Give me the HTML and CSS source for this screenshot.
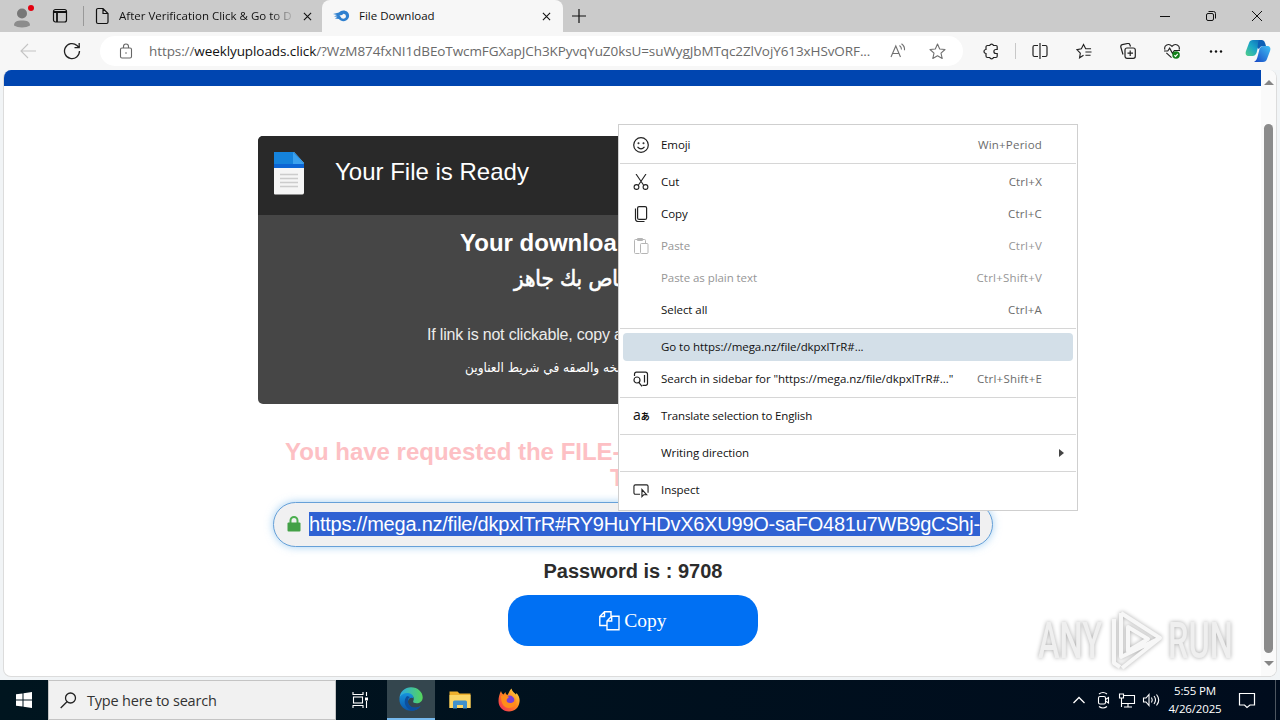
FILE: index.html
```html
<!DOCTYPE html>
<html lang="en">
<head>
    <meta charset="UTF-8">
    <meta name="viewport" content="width=device-width, initial-scale=1.0">
    <title>File Download</title>
    <link rel="stylesheet" href="styles.css">
</head>
<body>

    <div class="tabBar">
        <div class="profile">
            <svg width="24" height="28" viewBox="0 0 24 28"><circle cx="12" cy="11.500" r="5" fill="#777"/><path d="M4 23.500c0-4 3-5 8-5s8 1 8 5c-4 2.500-12 2.500-16 0z" fill="#8c8c8c"/><circle cx="21" cy="6" r="3" fill="#e3000f"/></svg>
        </div>
        <div class="tabActions">
            <svg width="16" height="16" viewBox="0 0 16 16" fill="none" stroke="#111" stroke-width="1.200"><rect x="1.500" y="1.500" width="13" height="12.500" rx="2"/><path d="M1.500 4h13M5 4v10" stroke-width="1.800"/></svg>
        </div>
        <div class="tab">
            <svg width="14" height="18" viewBox="0 0 14 18" fill="none" stroke="#111" stroke-width="1.200"><path d="M3 1.500h5L13 6.500V15a1.500 1.500 0 0 1-1.500 1.500h-8.500A1.500 1.500 0 0 1 1.500 15V3A1.500 1.500 0 0 1 3 1.500zM8 1.500v5h5"/></svg>
            <span class="tabTitle first">After Verification Click &amp; Go to D</span>
            <svg class="close" width="9" height="9" viewBox="0 0 10 10" stroke="#111" stroke-width="1.200"><path d="M1 1l8 8M9 1l-8 8"/></svg>
        </div>
        <div class="tab active">
            <svg width="17" height="14" viewBox="0 0 17 14"><path d="M0 5L6 3.500C8 1 12 .8 14.500 3c2.500 2.500 2 6.500-1 8.300-3 1.700-6 .7-7.500-1.300L2 9.500l2.500-1.800L1 7.500l3-1.500z" fill="#2f80cf"/><path d="M6.500 6.500q3-.3 4-1.700 2.500.2 2.500 2.400t-2.500 2.600Q8 9.800 7.800 8z" fill="#f7f7f7"/></svg>
            <span class="tabTitle second">File Download</span>
            <svg class="close" width="9" height="9" viewBox="0 0 10 10" stroke="#111" stroke-width="1.200"><path d="M1 1l8 8M9 1l-8 8"/></svg>
        </div>
        <div class="newTab">
            <svg width="14" height="14" viewBox="0 0 14 14" stroke="#111" stroke-width="1.200"><path d="M7 0v14M0 7h14"/></svg>
        </div>
        <div class="windowButtons">
            <svg width="10" height="10" viewBox="0 0 10 10" stroke="#111"><path d="M0 5.500h10"/></svg>
            <svg width="10" height="10" viewBox="0 0 10 10" fill="none" stroke="#111"><rect x=".5" y="2.500" width="7" height="7" rx="1.500"/><path d="M2.500.5H7.500a2 2 0 0 1 2 2v5"/></svg>
            <svg width="10" height="10" viewBox="0 0 10 10" stroke="#111"><path d="M0 0l10 10M10 0L0 10"/></svg>
        </div>
    </div>

    <div class="toolbar">
        <div class="navButtons">
            <svg width="16" height="16" viewBox="0 0 16 16" fill="none" stroke="#c4c4c4" stroke-width="1.100"><path d="M16 8H1M8 1L1 8l7 7"/></svg>
            <svg width="18" height="18" viewBox="0 0 18 18" fill="none" stroke="#222" stroke-width="1.300"><path d="M16.500 9A7.500 7.500 0 1 1 14 3.500L16 5.500M16.200 1v4.700h-4.700"/></svg>
        </div>
        <div class="address">
            <svg width="14" height="16" viewBox="0 0 14 16" fill="none" stroke="#666" stroke-width="1.100"><rect x="1.500" y="5" width="11" height="10" rx="1.500"/><path d="M4.500 5V3.500a2.500 2.500 0 0 1 5 0V5"/><circle cx="7" cy="10" r=".8" fill="#666" stroke="none"/></svg>
            <span class="url">https://<b>weeklyuploads.click</b>/?WzM874fxNI1dBEoTwcmFGXapJCh3KPyvqYuZ0ksU=suWygJbMTqc2ZlVojY613xHSvORF...</span>
            <svg class="readAloud" width="16" height="16" viewBox="0 0 16 16" fill="none" stroke="#707070" stroke-width="1.100"><path d="M1 14L5.800 3l4.700 11M2.500 10.500H9M9.500 2.500q2 1.500 2 4M11.500.7q3.500 2.500 3 6.500"/></svg>
            <svg width="17" height="17" viewBox="0 0 17 17" fill="none" stroke="#707070" stroke-width="1.100"><path d="M8.500 1l2.200 5 5.300.5-4 3.600 1.200 5.400-4.700-2.800-4.700 2.800L5 10.100 1 6.500l5.300-.5z" stroke-linejoin="round"/></svg>
        </div>
        <svg class="puzzle" width="17" height="17" viewBox="0 0 17 17" fill="none" stroke="#222" stroke-width="1.200"><path d="M4.500 2.500h2.200a2 2 0 0 1 3.800 0h2.500a1.200 1.200 0 0 1 1.200 1.200v2.800h-1.300a2 2 0 1 0 0 4h1.300v2.800a1.200 1.200 0 0 1-1.200 1.200h-2.500a2 2 0 0 1-3.800 0H4.500A1.500 1.500 0 0 1 3 13v-2.500a2 2 0 0 1 0-4V4a1.500 1.500 0 0 1 1.500-1.500z"/></svg>
        <div class="divider"></div>
        <div class="tools">
            <svg width="16" height="16" viewBox="0 0 16 16" fill="none" stroke="#222" stroke-width="1.200"><path d="M6 2.500H2.500A1.500 1.500 0 0 0 1 4v8a1.500 1.500 0 0 0 1.500 1.500H6M10 2.500h3.500A1.500 1.500 0 0 1 15 4v8a1.500 1.500 0 0 1-1.500 1.500H10M8 0v16"/></svg>
            <svg width="16" height="16" viewBox="0 0 17 16" fill="none" stroke="#222" stroke-width="1.200"><path d="M8 12.500L3.800 15.200l.8-5L1 6.500l4.700-.9L8 1l2.300 4.600H16M10 9h6.500M10 12.500h5.500"/></svg>
            <svg width="16" height="16" viewBox="0 0 16 16" fill="none" stroke="#222" stroke-width="1.200"><rect x="5" y="5" width="10.300" height="10.300" rx="2"/><path d="M10.200 7.500v5.500M7.500 10.200h5.500M3 11.500L.8 4a2 2 0 0 1 1.400-2.300l5.500-1.200A2 2 0 0 1 10 2l.5 1.500"/></svg>
            <svg width="16" height="16" viewBox="0 0 17 17" fill="none" stroke="#222" stroke-width="1.200"><path d="M1 7C-.5 2.500 5-.5 8.500 3.500 12-.5 17.500 2.500 16 7M2.500 10.500L8 15.500M0 8.500h4l2-3 3 5.500 2-3h6"/><circle cx="12.800" cy="12.800" r="4" fill="#12801a" stroke="none"/><path d="M11 13l1.300 1.200L14.600 11.500" stroke="#fff"/></svg>
            <svg width="16" height="16" viewBox="0 0 16 16" fill="#111"><circle cx="3" cy="8.500" r="1.200"/><circle cx="8" cy="8.500" r="1.200"/><circle cx="13" cy="8.500" r="1.200"/></svg>
        </div>
        <svg class="copilot" width="26" height="24" viewBox="0 0 26 24">
            <defs>
                <linearGradient id="copA" x1="0" y1="1" x2="1" y2="0"><stop offset="0" stop-color="#52cf86"/><stop offset=".5" stop-color="#1aa6c8"/><stop offset="1" stop-color="#0d62b8"/></linearGradient>
                <linearGradient id="copB" x1="0" y1="1" x2="1" y2="0"><stop offset="0" stop-color="#1746c4"/><stop offset="1" stop-color="#3fc0f5"/></linearGradient>
            </defs>
            <path d="M8 1h9c-2 1-3 3-4 7l-1.500 6c-1 2-2 3-4 3H4c-3 0-4-2-3-5l3-8c.5-2 2-3 4-3z" fill="url(#copA)"/>
            <path d="M18 23H9c2-1 3-3 4-7l1.500-6c1-2 2-3 4-3H22c3 0 4 2 3 5l-3 8c-.5 2-2 3-4 3z" fill="url(#copB)"/>
            <path d="M14 1h3c2 0 3 2 4 6h-3c-2 0-3 1-4 3l-1.500-1c.5-4 .5-6 1.500-8z" fill="#0d5fb5"/>
        </svg>
    </div>

    <div class="viewport">
        <div class="page">
            <div class="blueBar"></div>
            <div class="content">
                <div class="card">
                    <div class="cardHeader">
                        <svg width="32" height="44" viewBox="0 0 32 44"><path d="M1 0h20l10 11v30a2 2 0 0 1-2 1.500H2a1 1 0 0 1-1-1z" fill="#f5f5f5"/><path d="M1 0h20l10 11v5H1z" fill="#1583dc"/><path d="M1 12h30v4H1z" fill="#0c65d4"/><path d="M20 0l11 12H20z" fill="#3ba1ee"/><path d="M7 22.500h18M7 26.500h18M7 30.500h18M7 34.500h18" stroke="#ccc" stroke-width="1.500"/></svg>
                        <span>Your File is Ready</span>
                    </div>
                    <div class="cardBody">
                        <div class="ready">Your downloa</div>
                        <div class="readyAr" dir="rtl">خاص بك جاهز</div>
                        <div class="hint">If link is not clickable, copy a</div>
                        <div class="hintAr" dir="rtl">نسخه والصقه في شريط العناوين</div>
                    </div>
                </div>
                <div class="requested">You have requested the FILE-</div>
                <div class="requested secondLine">T</div>
                <div class="linkBox">
                    <svg width="14" height="16" viewBox="0 0 14 16"><path d="M3.500 8V4.500a3.500 3.500 0 0 1 7 0V8" fill="none" stroke="#4caf50" stroke-width="2"/><rect x=".5" y="6.500" width="13" height="9" rx="1" fill="#43a047"/></svg>
                    <span>https://mega.nz/file/dkpxlTrR#RY9HuYHDvX6XU99O-saFO481u7WB9gCShj-</span>
                </div>
                <div class="password">Password is : 9708</div>
                <div class="copyButton">
                    <svg width="21" height="20" viewBox="0 0 21 20" fill="none" stroke="#fff" stroke-width="1.400"><path d="M8 14.500H.8V5.500L5.500.8H12v4.500M5.500.8v4.700H.8M8 10l4.700-4.700H20v13.500H8zM12.700 5.300V10H8"/></svg>
                    <span>Copy</span>
                </div>
            </div>
        </div>
        <div class="scrollbar">
            <div class="arrow up"></div>
            <div class="thumb"></div>
            <div class="arrow down"></div>
        </div>
    </div>

    <div class="contextMenu">
        <div class="menuItem">
            <svg width="16" height="16" viewBox="0 0 16 16" fill="none" stroke="#222" stroke-width="1.200"><circle cx="8" cy="8" r="7.300"/><path d="M4.500 9.800q3.500 4 7 0"/><circle cx="5.500" cy="6.200" r=".4" fill="#222"/><circle cx="10.500" cy="6.200" r=".4" fill="#222"/></svg>
            <span>Emoji</span><kbd>Win+Period</kbd>
        </div>
        <div class="line"></div>
        <div class="menuItem">
            <svg width="16" height="16" viewBox="0 0 16 16" fill="none" stroke="#222" stroke-width="1.100"><path d="M3 0l7.500 11M13 0L5.500 11"/><circle cx="3.500" cy="13" r="2.400"/><circle cx="12.500" cy="13" r="2.400"/></svg>
            <span>Cut</span><kbd>Ctrl+X</kbd>
        </div>
        <div class="menuItem">
            <svg width="16" height="16" viewBox="0 0 16 16" fill="none" stroke="#222" stroke-width="1.200"><rect x="4.600" y=".6" width="9" height="12.800" rx="1.500"/><path d="M2.500 2.500v10.500a2.500 2.500 0 0 0 2.500 2.500h6.500"/></svg>
            <span>Copy</span><kbd>Ctrl+C</kbd>
        </div>
        <div class="menuItem disabled">
            <svg width="16" height="16" viewBox="0 0 16 16" fill="none" stroke="#b5b5b5" stroke-width="1"><path d="M6.500 15.500h-4a1 1 0 0 1-1-1v-12a1 1 0 0 1 1-1h9a1 1 0 0 1 1 1V5M4.500 2.500v-2h5v2z"/><rect x="7.500" y="5.500" width="7.500" height="10" rx="1"/></svg>
            <span>Paste</span><kbd>Ctrl+V</kbd>
        </div>
        <div class="menuItem disabled">
            <i></i><span>Paste as plain text</span><kbd>Ctrl+Shift+V</kbd>
        </div>
        <div class="menuItem">
            <i></i><span>Select all</span><kbd>Ctrl+A</kbd>
        </div>
        <div class="line"></div>
        <div class="menuItem selected">
            <i></i><span>Go to https://mega.nz/file/dkpxlTrR#...</span>
        </div>
        <div class="menuItem">
            <svg width="16" height="16" viewBox="0 0 16 16" fill="none" stroke="#222" stroke-width="1.200"><path d="M1.500 5V3A1.800 1.800 0 0 1 3.300 1.200h9.400A1.800 1.800 0 0 1 14.500 3v9.500a1.800 1.800 0 0 1-1.800 1.800H9.500M11.500 4v7.500M5.800 11.300l3.200 4"/><circle cx="4" cy="9" r="3"/></svg>
            <span>Search in sidebar for "https://mega.nz/file/dkpxlTrR#..."</span><kbd>Ctrl+Shift+E</kbd>
        </div>
        <div class="line"></div>
        <div class="menuItem">
            <b class="translateIcon">a<small>あ</small></b>
            <span class="translate">Translate selection to English</span>
        </div>
        <div class="line"></div>
        <div class="menuItem">
            <i></i><span>Writing direction</span><div class="submenuArrow"></div>
        </div>
        <div class="line"></div>
        <div class="menuItem">
            <svg width="16" height="16" viewBox="0 0 17 16" fill="none" stroke="#222" stroke-width="1.200"><path d="M7.500 12.500H2.500A1.500 1.500 0 0 1 1 11V4a1.500 1.500 0 0 1 1.500-1.500h12A1.500 1.500 0 0 1 16 4v7M9.500 7.500v7.500l2-2h3z"/></svg>
            <span>Inspect</span>
        </div>
    </div>

    <div class="watermark">
        <span>ANY</span>
        <svg width="60" height="64" viewBox="0 0 60 64" fill="none" stroke="#f7f7f7" stroke-width="4" stroke-linejoin="round"><path d="M16 4L55 29 17 59M16 4v44L55 29M23 18l20 12-20 12zM9 10v44l6 4"/></svg>
        <span>RUN</span>
    </div>

    <div class="taskbar">
        <div class="start">
            <svg width="16" height="16" viewBox="0 0 16 16" fill="#fff"><path d="M0 2.300L6.500 1.400V7.500H0zM7.500 1.200L16 0v7.500H7.500zM0 8.500h6.500v6.100L0 13.700zM7.500 8.500H16V16l-8.500-1.200z"/></svg>
        </div>
        <div class="search">
            <svg width="17" height="17" viewBox="0 0 17 17" fill="none" stroke="#222" stroke-width="1.300"><circle cx="10.500" cy="6" r="5"/><path d="M7 9.700L.7 16"/></svg>
            <span>Type here to search</span>
        </div>
        <div class="app taskView">
            <svg width="17" height="16" viewBox="0 0 17 16" fill="none" stroke="#fff" stroke-width="1.100"><path d="M1 0v2.500h10V0M1 16v-2.500h10V16M14.500 0v4M14.500 9v7"/><rect x="1.500" y="5" width="9" height="6"/><path d="M13 5.500h3v3h-3z" fill="#fff" stroke="none"/></svg>
        </div>
        <div class="app edge">
            <svg width="24" height="24" viewBox="0 0 24 24">
                <defs>
                    <linearGradient id="edgeA" x1="0" y1="0" x2="1" y2="0"><stop offset="0" stop-color="#2aa8e8"/><stop offset="1" stop-color="#55d65a"/></linearGradient>
                    <linearGradient id="edgeB" x1="0" y1="0" x2="0" y2="1"><stop offset="0" stop-color="#1593dd"/><stop offset="1" stop-color="#0b56aa"/></linearGradient>
                </defs>
                <path d="M.5 11C1 4.500 6 .3 12 .3c7 0 11.700 5 11.700 10 0 4-3 6-6 6-2.500 0-4-1-3.500-2 2-4-1-7-5-7-4 0-7.500 1.500-8.700 3.700z" fill="url(#edgeA)"/>
                <path d="M.5 11C2 7 6 5.500 9.500 6c3 .5 5 2.500 5 5.500-2-2-6 0-5.500 4 .5 5 7 7 12.500 3.500C19 22.500 15.500 24 12 23.800 5 23.500-.3 18 .5 11z" fill="url(#edgeB)"/>
                <path d="M8 9c-4 4-3 12 5 14.700 4 0 7-2 8.700-4.700-5 3-12 1.500-12.700-4C8.800 13 9 11 11 10z" fill="#0c4f9e"/>
            </svg>
        </div>
        <div class="app">
            <svg width="22" height="20" viewBox="0 0 22 20"><path d="M.5 1.500h8l2 2h11V18H.5z" fill="#eeb02d"/><path d="M.5 5h21v13H.5z" fill="#fbd667"/><path d="M4 18.500V12a1.500 1.500 0 0 1 1.500-1.500h11A1.500 1.500 0 0 1 18 12v6.500h-4V15H8v3.500z" fill="#3f91cd"/></svg>
        </div>
        <div class="app">
            <svg width="24" height="24" viewBox="0 0 24 24">
                <defs><linearGradient id="fox" x1="1" y1="0" x2="0" y2="1"><stop offset="0" stop-color="#ffe54a"/><stop offset=".45" stop-color="#ff8a1e"/><stop offset="1" stop-color="#f0205e"/></linearGradient></defs>
                <path d="M4 3c.5 2 1.500 3 2.500 3.500L8.500 4c0 1.500.5 2.500 2 3C12 5 12 3 14.500.5c.5 3 3 4 4.500 6l.5-1.500c2.500 3 3.500 5.500 3 9-.8 6-5 9.500-10.500 9.500C6 23.500 1.500 19 1.500 13 1.500 9 2.500 6 4 3z" fill="url(#fox)"/>
                <circle cx="12.500" cy="12.500" r="5" fill="#7a3fd4"/>
                <path d="M4 8c3-1.500 6 0 8 1l-2 2c-1 2 0 4 3 4s5-2 5-5c2 6-1 10-6 10S4 16 4 8z" fill="#ff8c1a"/>
            </svg>
        </div>
        <div class="tray">
            <svg width="24" height="18" viewBox="0 0 24 18" fill="none" stroke="#fff" stroke-width="1.300"><path d="M6.500 12L12 6.500l5.500 5.500"/></svg>
            <svg width="24" height="18" viewBox="0 0 24 18" fill="none" stroke="#fff" stroke-width="1.100"><rect x="7.500" y="5.500" width="7" height="7.500" rx="1.500"/><path d="M14.500 8.500l3-2v5.500l-3-2M8 3q4-3 8 0M8 15.500q4 3 8 0"/></svg>
            <svg width="24" height="18" viewBox="0 0 24 18" fill="none" stroke="#fff" stroke-width="1.100"><path d="M8.500 4.500H19.500v8H6.500V8M13 12.500v3.500M9 16h8M4.500 3h4v4h-4zM6.500 7v9"/></svg>
            <svg width="24" height="18" viewBox="0 0 24 18" fill="none" stroke="#fff" stroke-width="1.100"><path d="M4.500 7h2.500l3-3.500v11L7 11H4.500zM12.500 6.500q1.500 2.500 0 5M15 5q3 4 0 8M17.500 3.500q4.500 5.500 0 11"/></svg>
            <div class="clock"><span>5:55 PM</span><span>4/26/2025</span></div>
            <svg class="notify" width="18" height="18" viewBox="0 0 18 18" fill="none" stroke="#fff" stroke-width="1.200"><path d="M1.500 2.500h15v11.500H12L9 16.500 6.500 14h-5z"/></svg>
            <div class="showDesktop"></div>
        </div>
    </div>

</body>
</html>
```
FILE: styles.css
```css
body {
    margin: 0;
    width: 1280px;
    height: 720px;
    overflow: hidden;
    display: flex;
    flex-direction: column;
    font-family: "Open Sans", "Noto Sans", sans-serif;
    font-size: 11.5px;
    color: #111;
    background-color: #f1f4f6;
}

svg {
    display: block;
    flex-shrink: 0;
}

/* Tabs */
.tabBar {
    height: 32px;
    background-color: #cbcbcb;
    display: flex;
    align-items: center;
}

.profile {
    width: 24px;
    padding-left: 10px;
}

.tabActions {
    padding: 0 15px 0 18px;
    border-right: 1px solid #999;
    height: 20px;
    display: flex;
    align-items: center;
}

.tab {
    box-sizing: border-box;
    width: 237px;
    height: 32px;
    padding: 0 9px 0 11px;
    display: flex;
    align-items: center;
    border-radius: 8px 8px 0 0;
}

.tab.active {
    width: 241px;
    margin-left: 1px;
    padding-right: 12px;
    background-color: #f7f7f7;
}

.tabTitle {
    flex-grow: 1;
    white-space: nowrap;
    padding: 0 0 2px 9px;
}

.tabTitle.first {
    flex-grow: 0;
    width: 174px;
    padding-left: 10px;
    margin-right: auto;
    background: linear-gradient(to right, #111 88%, #bbb 100%);
    background-clip: text;
    -webkit-background-clip: text;
    color: transparent;
}

.newTab {
    padding-left: 9px;
}

.windowButtons {
    margin-left: auto;
    padding: 0 18px;
    display: flex;
    gap: 36px;
}

/* Toolbar */
.toolbar {
    height: 38px;
    background-color: #f7f7f7;
    display: flex;
    align-items: center;
}

.navButtons {
    width: 80px;
    padding-left: 20px;
    display: flex;
    align-items: center;
    gap: 27px;
}

.address {
    box-sizing: border-box;
    width: 863px;
    height: 30px;
    padding: 0 17px 0 19px;
    border-radius: 15px;
    background-color: #fff;
    display: flex;
    align-items: center;
}

.url {
    width: 725px;
    padding-left: 16px;
    font-size: 13.5px;
    letter-spacing: -0.09px;
    white-space: nowrap;
    color: #6a6a6a;
}

.url b {
    font-weight: normal;
    color: #111;
}

.readAloud {
    margin: 0 23px 0 17px;
}

.puzzle {
    margin-left: 20px;
}

.divider {
    width: 1px;
    height: 16px;
    margin: 0 16px 0 15px;
    background-color: #c8c8c8;
}

.tools {
    display: flex;
    gap: 28px;
}

.copilot {
    margin-left: 21px;
}

/* Page area */
.viewport {
    flex-shrink: 0;
    height: 606px;
    margin: 0 3px 3px;
    border: 1px solid #dcdcdc;
    border-top: 0;
    border-radius: 8px;
    overflow: hidden;
    display: flex;
    background-color: #fff;
}

.page {
    width: 1257px;
    font-family: "Liberation Sans", Arial, sans-serif;
}

.blueBar {
    height: 16px;
    background-color: #0045b0;
}

.content {
    width: 750px;
    margin: 50px auto 0 254px;
}

.card {
    height: 268px;
    border-radius: 5px;
    overflow: hidden;
    background-color: #464646;
    color: #fff;
}

.cardHeader {
    height: 79px;
    background-color: #292929;
    display: flex;
    font-size: 24px;
}

.cardHeader svg {
    margin: 16px 0 0 15px;
}

.cardHeader span {
    padding: 22px 0 0 30px;
}

.cardBody {
    white-space: nowrap;
}

.cardBody div {
    text-align: left;
}

.ready {
    font-size: 24px;
    font-weight: bold;
    line-height: 28px;
    padding: 14px 0 0 202px;
}

.readyAr {
    font-family: "DejaVu Sans Condensed", "DejaVu Sans", sans-serif;
    font-size: 22px;
    font-weight: normal;
    -webkit-text-stroke: 0.6px #fff;
    line-height: 32px;
    padding: 6px 0 0 256px;
}

.hint {
    font-size: 16px;
    letter-spacing: -0.19px;
    line-height: 20px;
    padding: 30px 0 0 169px;
    color: #ececec;
}

.hintAr {
    font-family: "DejaVu Sans Condensed", "DejaVu Sans", sans-serif;
    font-size: 13.5px;
    line-height: 20px;
    padding: 12px 0 0 207px;
}

.requested {
    padding-left: 27px;
    margin-top: 35px;
    font-size: 24px;
    font-weight: bold;
    line-height: 26px;
    color: #fdc0c4;
}

.requested.secondLine {
    padding-left: 352px;
    margin-top: 0;
}

.linkBox {
    box-sizing: border-box;
    width: 720px;
    height: 45px;
    margin: 11px 0 0 15px;
    padding: 0 0 1px 13px;
    border: 1px solid #66a0d8;
    border-radius: 23px;
    background-color: #f0f0f1;
    box-shadow: 0 0 8px rgba(102, 175, 233, 0.6);
    display: flex;
    align-items: center;
    gap: 8px;
}

.linkBox span {
    height: 24px;
    line-height: 24px;
    font-size: 20px;
    letter-spacing: -0.23px;
    color: #fff;
    background-color: #3062d3;
    white-space: nowrap;
}

.password {
    margin-top: 12px;
    text-align: center;
    font-size: 20px;
    font-weight: bold;
    line-height: 24px;
    color: #2c2c2c;
}

.copyButton {
    width: 250px;
    height: 51px;
    margin: 12px auto 0;
    border-radius: 20px;
    background-color: #0070f3;
    color: #fff;
    font-family: "Liberation Serif", "Times New Roman", serif;
    font-size: 19.5px;
    display: flex;
    align-items: center;
    justify-content: center;
    gap: 4px;
}

.scrollbar {
    width: 15px;
    background-color: #fafafa;
    display: flex;
    flex-direction: column;
    align-items: center;
}

.arrow {
    border: 5px solid transparent;
}

.arrow.up {
    border-bottom-color: #858585;
    border-top-width: 0;
    margin-top: 10px;
}

.arrow.down {
    border-top-color: #858585;
    border-bottom-width: 0;
    margin-top: 8px;
}

.thumb {
    width: 9px;
    height: 529px;
    margin-top: 39px;
    border-radius: 5px;
    background-color: #8b8b8b;
}

/* Context menu */
.contextMenu {
    position: absolute;
    box-sizing: border-box;
    left: 618px;
    top: 124px;
    width: 460px;
    height: 387px;
    padding: 4px 0;
    border: 1px solid #cfcfcf;
    background-color: #fff;
    display: flex;
    flex-direction: column;
}

.menuItem {
    box-sizing: border-box;
    height: 32px;
    flex-shrink: 0;
    padding: 0 35px 0 14px;
    display: flex;
    align-items: center;
    white-space: nowrap;
    letter-spacing: -0.06px;
}

.menuItem svg,
.menuItem i,
.translateIcon {
    width: 16px;
    margin-right: 12px;
}

.menuItem span,
.menuItem kbd {
    padding-bottom: 2px;
}

.menuItem .translate {
    letter-spacing: -0.15px;
}

.menuItem kbd {
    margin-left: auto;
    font-family: inherit;
    font-size: 11.5px;
    letter-spacing: 0.2px;
    color: #6c6c6c;
}

.menuItem.disabled,
.menuItem.disabled kbd {
    color: #969696;
}

.menuItem.selected {
    height: 28px;
    margin: 2px 4px;
    padding-left: 10px;
    border-radius: 4px;
    background-color: #d3dfe8;
}

.line {
    height: 1px;
    flex-shrink: 0;
    margin: 2px 1px;
    background-color: #d6d6d6;
}

.translateIcon {
    font-size: 14px;
    font-weight: normal;
    line-height: 16px;
}

.translateIcon small {
    font-family: "Noto Sans CJK JP", sans-serif;
    font-size: 9px;
    font-weight: bold;
}

.submenuArrow {
    margin-left: auto;
    margin-right: -22px;
    border: 4px solid transparent;
    border-left: 5px solid #444;
    border-right: 0;
}

/* Watermark over the page */
.watermark {
    position: absolute;
    left: 1038px;
    top: 608px;
    width: 193px;
    height: 66px;
    display: flex;
    align-items: center;
    justify-content: space-between;
    filter: drop-shadow(0 0 2px #aaa);
}

.watermark span {
    width: 63px;
    font-family: Roboto, sans-serif;
    font-size: 50px;
    font-weight: 500;
    line-height: 60px;
    color: #efefef;
    transform: scaleX(0.65);
    transform-origin: left;
}

/* Taskbar */
.taskbar {
    height: 40px;
    display: flex;
    background: linear-gradient(to right, #00151f, #000c1d);
}

.start {
    width: 48px;
    display: flex;
    align-items: center;
    justify-content: center;
}

.search {
    box-sizing: border-box;
    width: 288px;
    padding-left: 11px;
    border: 1px solid #c4c4c4;
    background-color: #f1f1f1;
    display: flex;
    align-items: center;
    gap: 10px;
    font-size: 14.5px;
    letter-spacing: -0.2px;
    color: #333;
}

.app {
    width: 49px;
    display: flex;
    align-items: center;
    justify-content: center;
}

.app.taskView {
    box-sizing: border-box;
    width: 51px;
    padding-right: 3px;
}

.app.edge {
    box-sizing: border-box;
    width: 48px;
    border-bottom: 2px solid #76b9ed;
    background-color: #34464e;
}

.tray {
    margin-left: auto;
    display: flex;
    align-items: center;
    color: #fff;
}

.clock {
    width: 64px;
    display: flex;
    flex-direction: column;
    align-items: center;
    line-height: 18px;
    letter-spacing: -0.15px;
}

.notify {
    margin: 0 19px 0 11px;
}

.showDesktop {
    width: 4px;
    height: 40px;
    border-left: 1px solid #4d5660;
}
```
